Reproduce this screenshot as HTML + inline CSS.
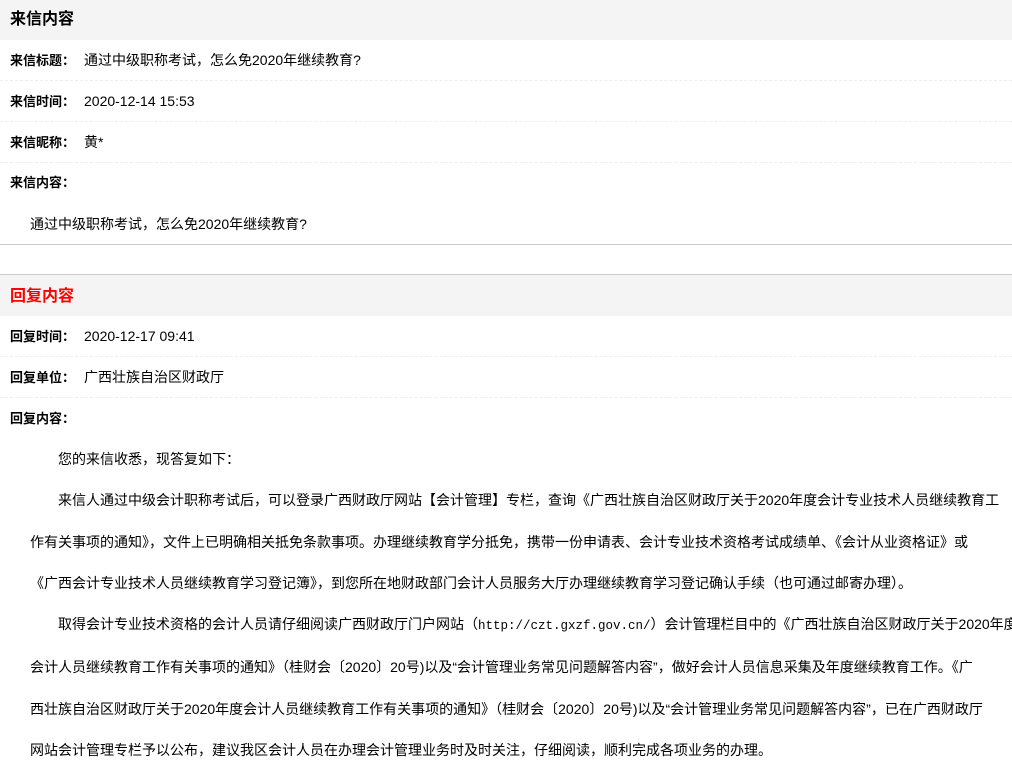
<!DOCTYPE html>
<html><head><meta charset="utf-8"><style>
body{margin:0;width:1012px;height:757px;overflow:hidden;background:#fff;font-family:"Liberation Sans","Noto Sans CJK SC",sans-serif;color:#000}
.hd{height:40px;background:#f4f4f4;font-size:16px;font-weight:bold;line-height:40px;padding-left:10px}
.row{height:40px;line-height:40px;font-size:13px;padding-left:10px;border-bottom:1px dashed #eee;white-space:nowrap}
.row b{display:inline-block;width:74px}
.row span{font-size:14px}
.p{font-size:14px;line-height:41.3px;padding-left:30px;white-space:nowrap}
.i{padding-left:28px}
.m{font-family:"Liberation Mono",monospace;font-size:12.5px}
</style></head><body>
<div class="hd">来信内容</div>
<div class="row"><b>来信标题：</b><span>通过中级职称考试，怎么免2020年继续教育?</span></div>
<div class="row"><b>来信时间：</b><span>2020-12-14 15:53</span></div>
<div class="row"><b>来信昵称：</b><span>黄*</span></div>
<div class="row" style="border:none"><b>来信内容：</b></div>
<div style="height:40px;padding-top:1px;line-height:40px;font-size:14px;padding-left:30px;border-bottom:1px solid #ccc">通过中级职称考试，怎么免2020年继续教育?</div>
<div style="height:29px;border-bottom:1px solid #ccc"></div>
<div class="hd" style="color:#f00;height:41px;line-height:43px">回复内容</div>
<div class="row"><b>回复时间：</b><span>2020-12-17 09:41</span></div>
<div class="row"><b>回复单位：</b><span>广西壮族自治区财政厅</span></div>
<div class="row" style="border:none;line-height:42px"><b>回复内容：</b></div>
<div class="p" style="margin-top:1px">
<div class="i">您的来信收悉，现答复如下：</div>
<div class="i">来信人通过中级会计职称考试后，可以登录广西财政厅网站【会计管理】专栏，查询《广西壮族自治区财政厅关于2020年度会计专业技术人员继续教育工</div>
<div>作有关事项的通知》，文件上已明确相关抵免条款事项。办理继续教育学分抵免，携带一份申请表、会计专业技术资格考试成绩单、《会计从业资格证》或</div>
<div>《广西会计专业技术人员继续教育学习登记簿》，到您所在地财政部门会计人员服务大厅办理继续教育学习登记确认手续（也可通过邮寄办理）。</div>
<div class="i">取得会计专业技术资格的会计人员请仔细阅读广西财政厅门户网站（<span class="m">http://czt.gxzf.gov.cn/</span>）会计管理栏目中的《广西壮族自治区财政厅关于2020年度</div>
<div>会计人员继续教育工作有关事项的通知》（桂财会〔2020〕20号)以及“会计管理业务常见问题解答内容”，做好会计人员信息采集及年度继续教育工作。《广</div>
<div>西壮族自治区财政厅关于2020年度会计人员继续教育工作有关事项的通知》（桂财会〔2020〕20号)以及“会计管理业务常见问题解答内容”，已在广西财政厅</div>
<div>网站会计管理专栏予以公布，建议我区会计人员在办理会计管理业务时及时关注，仔细阅读，顺利完成各项业务的办理。</div>
</div>
</body></html>
